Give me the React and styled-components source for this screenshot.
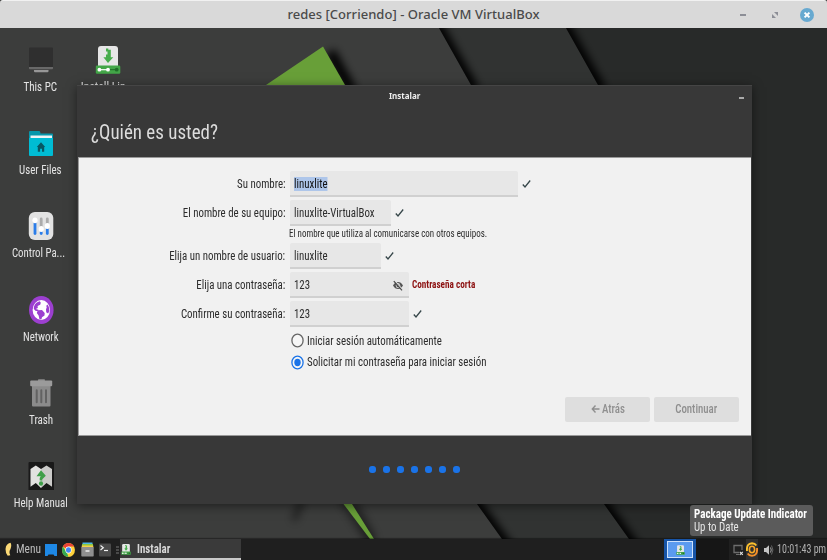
import React from 'react';
import styled, { createGlobalStyle, css } from 'styled-components';

const Global = createGlobalStyle`
  * { box-sizing: border-box; }
  body { margin: 0; overflow: hidden; background: #3b3c3b; }
`;

const Screen = styled.div`
  width: 827px;
  height: 560px;
  display: flex;
  flex-direction: column;
  overflow: hidden;
  font-family: Roboto, sans-serif;
`;

/* Narrow UI lettering; $o is the side that stays in place when squeezed. */
const Text = styled.span`
  display: inline-block;
  white-space: nowrap;
  font-family: Roboto, sans-serif;
  font-stretch: 75%;
  font-size: ${p => p.$size || 12}px;
  font-weight: ${p => p.$weight || 400};
  line-height: 1.2;
  color: ${p => p.$color || '#2c2c2c'};
  transform: scaleX(${p => p.$s || 0.905});
  transform-origin: ${p => p.$o || 'left'} center;
`;

/* ---------- host window ---------- */
const HostBar = styled.header`
  flex: none;
  height: 28px;
  display: grid;
  grid-template-columns: 1fr auto 1fr;
  align-items: center;
  background: #d9d9d9;
  border-top: 1px solid #f1f1f1;
  border-radius: 3px 3px 0 0;
`;
const HostTitle = styled.h1`
  grid-column: 2;
  margin: 0 0 1px;
  font: 500 13px "Noto Sans", sans-serif;
  letter-spacing: .03px;
  color: #4a4a4a;
  white-space: nowrap;
`;
const HostButtons = styled.div`
  display: flex;
  justify-content: flex-end;
  align-items: center;
  gap: 18px;
  padding-right: 13px;
`;
const Svg = styled.svg`
  display: block;
  flex: none;
`;

/* ---------- desktop ---------- */
const Desktop = styled.main`
  position: relative;
  flex: 1;
  min-height: 0;
  display: flex;
  flex-direction: column;
  background: #3c3d3c;
`;
const Wallpaper = styled.svg`
  position: absolute;
  inset: 0;
`;
const Icons = styled.div`
  position: relative;
  flex: 1;
  min-height: 0;
  display: grid;
  grid-auto-flow: column;
  grid-template-rows: repeat(6, 83.2px);
  grid-auto-columns: 67.5px;
  padding-left: 7px;
`;
const IconCell = styled.div`
  display: flex;
  flex-direction: column;
  align-items: center;
  gap: 6px;
  padding-top: 18px;
`;
const IconName = styled(Text)`
  margin-right: ${p => p.$pull || 0}px;
`;

/* ---------- installer window ---------- */
const Installer = styled.section`
  position: absolute;
  left: 77px;
  top: 57px;
  width: 675px;
  height: 419px;
  display: flex;
  flex-direction: column;
  background: #383838;
  border-top: 1px solid #454545;
  box-shadow: 0 2px 10px rgba(0, 0, 0, .5);
`;
const TitleBar = styled.div`
  height: 21px;
  display: grid;
  grid-template-columns: 1fr auto 1fr;
  align-items: center;
  padding: 0 20px 1px 0;
`;
const TitleText = styled(Text)`
  grid-column: 2;
  font-family: "Noto Sans", sans-serif;
  font-stretch: 100%;
`;
const Minimize = styled.i`
  justify-self: end;
  width: 5px;
  height: 2px;
  margin: 4px -12px 0 0;
  background: #aaa;
`;
const Heading = styled.div`
  height: 50px;
  padding: 13px 0 0 14px;
`;
const Panel = styled.div`
  height: 279px;
  margin: 0 1px;
  display: flex;
  flex-direction: column;
  background: #f1f1f1;
  border: 1px solid #999;
  border-right: 0;
  padding-top: 13px;
`;
const Row = styled.div`
  display: grid;
  grid-template-columns: 206.5px 1fr;
  column-gap: 4px;
  height: 26px;
  margin-bottom: ${p => (p.$tight ? 0 : 3)}px;
`;
const Label = styled.label`
  display: flex;
  justify-content: flex-end;
  align-items: center;
  padding-top: 1px;
`;
const Control = styled.div`
  display: flex;
  align-items: center;
`;
const Field = styled.div`
  width: ${p => p.$w}px;
  height: 26px;
  display: flex;
  align-items: center;
  justify-content: space-between;
  padding: 2px 6px 0 4.4px;
  background: #e7e7e7;
  border-bottom: 2px solid #d0d0d0;
  border-radius: 2px 2px 0 0;
`;
const Value = styled(Text)`
  ${p => p.$selected && css`background: #aec6ea; color: #111;`}
`;
const After = styled.div`
  margin-left: ${p => p.$gap || 4}px;
  display: flex;
`;
const Hint = styled.div`
  height: 17px;
  display: flex;
  align-items: flex-start;
  padding: 2px 0 0 210.4px;
`;
const Choice = styled.div`
  height: 21.5px;
  display: flex;
  align-items: center;
  gap: 3px;
  padding-left: 212.4px;
`;
const Actions = styled.div`
  margin-top: 23.5px;
  display: flex;
  justify-content: flex-end;
  gap: 4px;
  padding-right: 12px;
`;
const Button = styled.div`
  width: 85px;
  height: 25px;
  display: flex;
  align-items: center;
  justify-content: center;
  gap: 1.5px;
  padding-left: ${p => p.$shift || 0}px;
  background: #dedede;
  border-radius: 2px;
`;
const Dots = styled.div`
  flex: 1;
  display: flex;
  justify-content: center;
  align-items: center;
  gap: 7px;
  padding-bottom: 2px;
`;
const Dot = styled.i`
  width: 7px;
  height: 7px;
  border-radius: 3px;
  background: #1a73e8;
`;

/* ---------- taskbar ---------- */
const Taskbar = styled.footer`
  position: relative;
  flex: none;
  height: 21px;
  display: flex;
  align-items: center;
  background: #1f1f1f;
  box-shadow: 0 -1px 1px rgba(0, 0, 0, .35);
`;
const Launchers = styled.div`
  width: 120px;
  height: 21px;
  display: flex;
  align-items: center;
  padding-left: 3px;
`;
const MenuBox = styled.div`
  width: 42px;
  display: flex;
  align-items: center;
  gap: 3px;
`;
const Slots = styled.div`
  display: flex;
  align-items: center;
  gap: 5.3px;
`;
const Task = styled.div`
  width: 121px;
  height: 21px;
  display: flex;
  align-items: center;
  gap: 6px;
  padding: 2px 0 0 1px;
  background: #3a3a3a;
  border-bottom: 2px solid #c9c9c9;
`;
const Pager = styled.div`
  width: 32px;
  height: 21px;
  margin-left: auto;
  padding: 2px 3px;
  background: #1754a6;
`;
const PagerWindow = styled.div`
  height: 17px;
  display: flex;
  align-items: center;
  justify-content: center;
  background: #5b9bef;
  border: 1px solid #cfe2fb;
`;
const PagerGap = styled.div`
  width: 33px;
  height: 21px;
  background: #161616;
`;
const Tray = styled.div`
  width: 99px;
  height: 21px;
  margin-right: -1px;
  display: flex;
  align-items: center;
  padding-left: 2.5px;
`;
const TrayHot = styled.div`
  width: 14px;
  height: 21px;
  margin: 0 2px;
  display: flex;
  align-items: center;
  justify-content: center;
  background: #303030;
`;
const Clock = styled.div`
  display: flex;
  margin-left: 1.5px;
`;
const Tooltip = styled.div`
  position: absolute;
  left: 690px;
  top: 477px;
  width: 123px;
  height: 31px;
  padding: 3px 0 0 4.4px;
  display: flex;
  flex-direction: column;
  align-items: flex-start;
  background: #5b5b5b;
  border-radius: 3px;
`;
const TipLine = styled(Text)`
  line-height: 13px;
`;

const Check = () => (
  <Svg width="9" height="10" viewBox="0 0 9 10">
    <path d="M.8 5.500 3 8 8.200 1.500" fill="none" stroke="#37474a" strokeWidth="1.300" />
  </Svg>
);

const EyeOff = () => (
  <Svg width="10" height="11" viewBox="0 0 10 11">
    <path d="M0 5.500C1.300 3 3 2 5 2s3.700 1 5 3.500C8.700 8 7 9 5 9S1.300 8 0 5.500Z" fill="#555" />
    <ellipse cx="5" cy="5.500" rx="2.200" ry="2.500" fill="#e6e6e6" />
    <ellipse cx="5" cy="5.500" rx="1.500" ry="1.800" fill="#555" />
    <path d="M1.600.6 9.600 9.600" stroke="#e6e6e6" strokeWidth="1.200" />
    <path d="M.8 1.100 9 10.400" stroke="#4a4a4a" strokeWidth="1.200" />
  </Svg>
);

const Radio = ({ on }) => (
  <Svg width="13" height="15" viewBox="0 0 13 15">
    <ellipse cx="6.500" cy="7.500" rx="5.600" ry="6.400" fill="#f6f6f6" stroke={on ? '#1a73e8' : '#666'} strokeWidth="1.300" />
    {on && <ellipse cx="6.500" cy="7.500" rx="3.200" ry="3.700" fill="#1a73e8" />}
  </Svg>
);

const Pc = () => (
  <Svg width="26" height="28" viewBox="0 0 26 28">
    <rect x="1" y="1.500" width="24" height="21" rx="1" fill="#2f2f2f" />
    <path d="M1 21h24v1.500q0 .8-1 .8H2q-1 0-1-.8Z" fill="#686868" />
    <path d="M5.500 23.300h15v1h-15Z" fill="#4b4b4b" />
    <path d="M6 24h14.500v1.300q0 1-1 1H7q-1 0-1-1Z" fill="#979797" />
  </Svg>
);

const Drive = ({ w = 26, h = 28 }) => (
  <Svg width={w} height={h} viewBox="0 0 26 28">
    <path d="M3 21V3Q3 0 6 0H20Q23 0 23 3V21Z" fill="#e6e6e6" />
    <rect x=".8" y="19.500" width="24.500" height="8.300" rx="1.300" fill="#43a648" />
    <path d="M11 2.500h2.300v1.300h2.500v7.400h2.500L13 17 8.400 11.200H11V8.500h1.500V5.500H11Z" fill="#47ad4c" />
    <path d="M13 23.700h9" stroke="#1f6e28" strokeWidth="1" />
    <circle cx="21.700" cy="23.700" r="1.900" fill="#1f6e28" />
    <path d="M4 23.700h9" stroke="#fff" strokeWidth="1.200" />
    <circle cx="4.400" cy="23.700" r="1.900" fill="#fff" />
    <circle cx="13" cy="23.700" r="1.900" fill="#fff" />
  </Svg>
);

const Folder = () => (
  <Svg width="26" height="28" viewBox="0 0 26 28">
    <path d="M1 3q0-1 1-1h9q1 0 1.200 1l.3 1.500H24q1 0 1 1V14H1Z" fill="#0797ab" />
    <rect x="2.500" y="6.500" width="21.500" height="5" fill="#eef4f5" />
    <path d="M1 9h24v17q0 1-1 1H2q-1 0-1-1Z" fill="#00bcd4" />
    <path d="M13 13.300 8.800 18h1v4.700h2.300v-3h1.900v3h2.200V18h1Z" fill="#075763" />
  </Svg>
);

const Sliders = () => (
  <Svg width="26" height="28" viewBox="0 0 26 28">
    <rect x=".8" y="0" width="24.500" height="28" rx="6" fill="#e2e2e2" />
    <g strokeWidth="2.800" strokeLinecap="round">
      <path d="M7 8v13.500" stroke="#2b7de9" />
      <path d="M13.200 7v11" stroke="#ababab" />
      <path d="M13.200 20v1.500" stroke="#2b7de9" />
      <path d="M19.300 7v7" stroke="#ababab" />
      <path d="M19.300 17v4.500" stroke="#2b7de9" />
    </g>
    <g fill="#fff">
      <ellipse cx="7" cy="8.300" rx="2.600" ry="2.900" />
      <ellipse cx="13.200" cy="17" rx="2.600" ry="2.900" />
      <ellipse cx="19.300" cy="14" rx="2.600" ry="2.900" />
    </g>
  </Svg>
);

const Globe = () => (
  <Svg width="26" height="28" viewBox="0 0 26 28">
    <ellipse cx="13.300" cy="14" rx="12.300" ry="14" fill="#9c3fd0" />
    <ellipse cx="13.300" cy="14" rx="8.700" ry="10" fill="#fff" />
    <g fill="#9c3fd0">
      <path d="M6 10.500C7 7.800 9 6 11.800 5.300l1 1.400-.6 2.100-2.600 1.200.2 2-2 1 2.600.8-.3 1.300H7.800L5.800 13Z" />
      <path d="m9.800 14.300 4.200-.2 2.700 2.800-.2 2.700-2.500 1.700-.6 2.300-2-.6-.8-3.400-1.800-2.600Z" />
      <path d="M19.500 8.600Q21.600 11 21.400 15l-1.300 2.600-1.900-1.400-.2-3 .7-1.600-.4-1.800Z" />
    </g>
  </Svg>
);

const TrashCan = () => (
  <Svg width="26" height="28" viewBox="0 0 26 28">
    <path d="M10 2V.8q0-.6.6-.6h5.700q.6 0 .6.600V2Z" fill="#8a8a8a" />
    <path d="M4 7h18.500v19.500q0 1-1 1H5q-1 0-1-1Z" fill="#8b8b8b" />
    <rect x="2.200" y="1.600" width="22" height="5.600" rx="1" fill="#9b9b9b" />
    <path d="M8.700 11.300v12M13.300 11.300v12M18 11.300v12" stroke="#626262" strokeWidth="2" strokeLinecap="round" />
  </Svg>
);

const Manual = () => (
  <Svg width="26" height="28" viewBox="0 0 26 28">
    <rect x=".5" y="0" width="25.500" height="28.500" rx="1" fill="#191919" />
    <path d="M2.500 7 7.800 3.500 13 7v19L7.800 21 2.500 24.700Z" fill="#e2e2e0" />
    <path d="M13 7l5.500-3.500L24 7v17.700L18.500 21 13 26Z" fill="#cbcbc9" />
    <path d="M13 8.300 17.800 13.700 14.300 17.200V18.500H11.700V16l1-1.800H8.500Z" fill="#3f9f49" />
    <ellipse cx="13" cy="21.500" rx="2.100" ry="2.300" fill="#3f9f49" />
  </Svg>
);

const DESK = [
  ['This PC', Pc, 0.92, 1], ['User Files', Folder, 0.91, 0], ['Control Pa...', Sliders, 0.9, 5],
  ['Network', Globe, 0.9, 0], ['Trash', TrashCan, 0.92, 0], ['Help Manual', Manual, 0.91, 0],
  ['Install Lin...', Drive, 0.97, 0],
];

export default function App() {
  return (
    <Screen>
      <Global />
      <HostBar>
        <HostTitle>redes [Corriendo] - Oracle VM VirtualBox</HostTitle>
        <HostButtons>
          <Svg width="14" height="14" viewBox="0 0 14 14"><path d="M4 7h6" stroke="#8c8e96" strokeWidth="2" /></Svg>
          <Svg width="14" height="14" viewBox="0 0 14 14"><path d="M6 4h4v4ZM4 6v4h4Z" fill="#8c8e96" /></Svg>
          <Svg width="14" height="14" viewBox="0 0 14 14">
            <circle cx="7" cy="7" r="7" fill="#67a9d0" />
            <path d="m4.600 4.600 4.800 4.800m0-4.800-4.800 4.800" stroke="#fff" strokeWidth="2" />
          </Svg>
        </HostButtons>
      </HostBar>
      <Desktop>
        <Wallpaper width="827" height="532" viewBox="0 28 827 532">
          <defs>
            <filter id="soft" x="-50%" y="-50%" width="200%" height="200%"><feGaussianBlur stdDeviation="4" /></filter>
            <clipPath id="mid"><path d="M439 28 471 85 603 300 477 504 502 539V560H827V28Z" /></clipPath>
            <clipPath id="far"><path d="M566 28 598 85 730 300 604 504 629 539V560H827V28Z" /></clipPath>
          </defs>
          <rect y="28" width="827" height="532" fill="#3c3d3c" />
          <g clipPath="url(#mid)">
            <rect x="400" y="28" width="427" height="532" fill="#313332" />
            <path d="M422 0 474 91M450 469 510 551" stroke="#000" strokeWidth="12" filter="url(#soft)" />
          </g>
          <g clipPath="url(#far)">
            <rect x="500" y="28" width="327" height="532" fill="#282a29" />
            <path d="M549 0 601 91M577 469 637 551" stroke="#000" strokeWidth="12" filter="url(#soft)" />
          </g>
          <path d="M330 52 352 92" stroke="#000" strokeWidth="11" filter="url(#soft)" />
          <path d="M323 46.500 266 85 345 85Z" fill="#689f38" />
          <path d="m302 500-8 20M342 500 371 544M352 500 374 540" stroke="#000" strokeWidth="4" opacity=".7" filter="url(#soft)" />
          <path d="M343.500 504H352L374 539H370Z" fill="#689f38" />
        </Wallpaper>
        <Icons>
          {DESK.map(([name, Art, s, pull]) => (
            <IconCell key={name}>
              <Art />
              <IconName $color="#e4e4e4" $o="center" $s={s} $pull={pull}>{name}</IconName>
            </IconCell>
          ))}
        </Icons>
        <Installer>
          <TitleBar>
            <TitleText $size={9} $weight={700} $color="#eee" $o="center" $s={0.89}>Instalar</TitleText>
            <Minimize />
          </TitleBar>
          <Heading><Text $size={20} $s={0.948} $color="#dcdcdc">¿Quién es usted?</Text></Heading>
          <Panel>
            <Row>
              <Label><Text $o="right">Su nombre:</Text></Label>
              <Control><Field $w={228}><Value $selected>linuxlite</Value></Field><After><Check /></After></Control>
            </Row>
            <Row $tight>
              <Label><Text $o="right">El nombre de su equipo:</Text></Label>
              <Control><Field $w={101}><Value>linuxlite-VirtualBox</Value></Field><After><Check /></After></Control>
            </Row>
            <Hint><Text $size={10} $s={0.897}>El nombre que utiliza al comunicarse con otros equipos.</Text></Hint>
            <Row>
              <Label><Text $o="right">Elija un nombre de usuario:</Text></Label>
              <Control><Field $w={91}><Value>linuxlite</Value></Field><After><Check /></After></Control>
            </Row>
            <Row>
              <Label><Text $o="right">Elija una contraseña:</Text></Label>
              <Control>
                <Field $w={119}><Value>123</Value><EyeOff /></Field>
                <After $gap={3.5}><Text $size={10} $weight={700} $s={0.92} $color="#8c1010">Contraseña corta</Text></After>
              </Control>
            </Row>
            <Row>
              <Label><Text $o="right">Confirme su contraseña:</Text></Label>
              <Control><Field $w={119}><Value>123</Value></Field><After><Check /></After></Control>
            </Row>
            <Choice><Radio /><Text>Iniciar sesión automáticamente</Text></Choice>
            <Choice><Radio on /><Text>Solicitar mi contraseña para iniciar sesión</Text></Choice>
            <Actions>
              <Button $shift={3}>
                <Svg width="9" height="10" viewBox="0 0 9 10"><path d="M8.500 5H1.500M4.500 1.500 1.300 5l3.200 3.500" fill="none" stroke="#8f8f8f" strokeWidth="1.400" /></Svg>
                <Text $weight={500} $color="#8f8f8f">Atrás</Text>
              </Button>
              <Button><Text $weight={500} $color="#8f8f8f" $o="center">Continuar</Text></Button>
            </Actions>
          </Panel>
          <Dots>{[0, 1, 2, 3, 4, 5, 6].map(i => <Dot key={i} />)}</Dots>
        </Installer>
        <Taskbar>
          <Launchers>
            <MenuBox>
              <Svg width="10" height="15" viewBox="0 0 10 15"><path d="M7.500.8Q3 1.500 2.500 7q0 4.500 2.200 6.800l2.600-.6Q5.500 10 7.500 7 9 3 7.500.8Z" fill="#fbd976" /></Svg>
              <Text $color="#bdbdbd" $s={0.95}>Menu</Text>
            </MenuBox>
            <Slots>
              <Svg width="12" height="14" viewBox="0 0 12 14"><path d="M0 1h12v12H9.500l-1-1.500h-5l-1 1.500H0Z" fill="#1e88e5" /></Svg>
              <Svg width="13" height="14" viewBox="0 0 24 26">
                <ellipse cx="12" cy="13" rx="12" ry="13" fill="#fdd13a" />
                <path d="M12 13 1.500 6.500Q5 0 12 0T22.500 6.500H12Z" fill="#e94235" />
                <path d="M1.500 6.500 9 18l3 8Q0 25 0 13 0 9 1.500 6.500Z" fill="#34a853" />
                <ellipse cx="12" cy="13" rx="5.800" ry="6.300" fill="#fff" />
                <ellipse cx="12" cy="13" rx="4.600" ry="5" fill="#4285f4" />
              </Svg>
              <Svg width="13" height="15" viewBox="0 0 13 15">
                <path d="M1.500.5h10V3h-10Z" fill="#4cb7e5" /><path d="M1 2h11v2H1Z" fill="#8ac640" /><path d="M.7 3.500h11.600V6H.7Z" fill="#f5cf48" />
                <rect x=".3" y="5" width="12.400" height="9.500" rx=".8" fill="#8f8f8f" /><path d="M4.500 9h4" stroke="#eee" strokeWidth="1.500" />
              </Svg>
              <Svg width="12" height="14" viewBox="0 0 12 14">
                <rect y=".5" width="12" height="13" rx="1" fill="#4a4a4a" />
                <path d="m1.500 2.500 2.800 2.300L1.500 7" fill="none" stroke="#f2f2f2" strokeWidth="1.200" /><path d="M5 7.500h4" stroke="#f2f2f2" strokeWidth="1.200" />
              </Svg>
              <Svg width="3" height="8" viewBox="0 0 3 8"><path d="M0 1h3M0 4h3M0 7h3" stroke="#777" strokeWidth="1" /></Svg>
            </Slots>
          </Launchers>
          <Task>
            <Drive w={10} h={11} />
            <Text $weight={700} $color="#d8d8d8" $s={0.91}>Instalar</Text>
          </Task>
          <Pager><PagerWindow><Drive w={9} h={10} /></PagerWindow></Pager>
          <PagerGap />
          <Tray>
            <Svg width="12" height="13" viewBox="0 0 12 13">
              <path d="M10 7V2.500H2V9.500h5" fill="none" stroke="#6d6d6d" strokeWidth="1.300" /><path d="M4 11.500h3" stroke="#6d6d6d" />
              <path d="m7.800 8.800 3 3m0-3-3 3" stroke="#ddd" strokeWidth="1.200" />
            </Svg>
            <TrayHot>
              <Svg width="12" height="15" viewBox="0 0 12 15" fill="none" strokeWidth="1.900">
                <path d="M1 9Q.3 1.500 6 1.300q3 0 4.300 2.200" stroke="#fbc02d" />
                <path d="M11 6q.7 7.500-5 7.700-3 0-4.300-2.200" stroke="#f5902a" />
                <ellipse cx="6" cy="7.500" rx="2.600" ry="3.200" stroke="#f9a825" strokeWidth="1.600" />
              </Svg>
            </TrayHot>
            <Svg width="16" height="12" viewBox="0 0 16 12">
              <path d="M4 4H6L9 1.300v9.400L6 8H4Z" fill="#c4c4c4" />
              <path d="M10.500 3.500q1.500 2.500 0 5" fill="none" stroke="#a5a5a5" strokeWidth="1" />
              <path d="M11.500 1.500q2.900 4.500 0 9" fill="none" stroke="#666" strokeWidth="1" />
            </Svg>
            <Clock><Text $color="#b0b0b0" $s={0.835}>10:01:43 pm</Text></Clock>
          </Tray>
        </Taskbar>
        <Tooltip>
          <TipLine $weight={700} $color="#fff" $s={0.917}>Package Update Indicator</TipLine>
          <TipLine $color="#e6e6e6">Up to Date</TipLine>
        </Tooltip>
      </Desktop>
    </Screen>
  );
}
